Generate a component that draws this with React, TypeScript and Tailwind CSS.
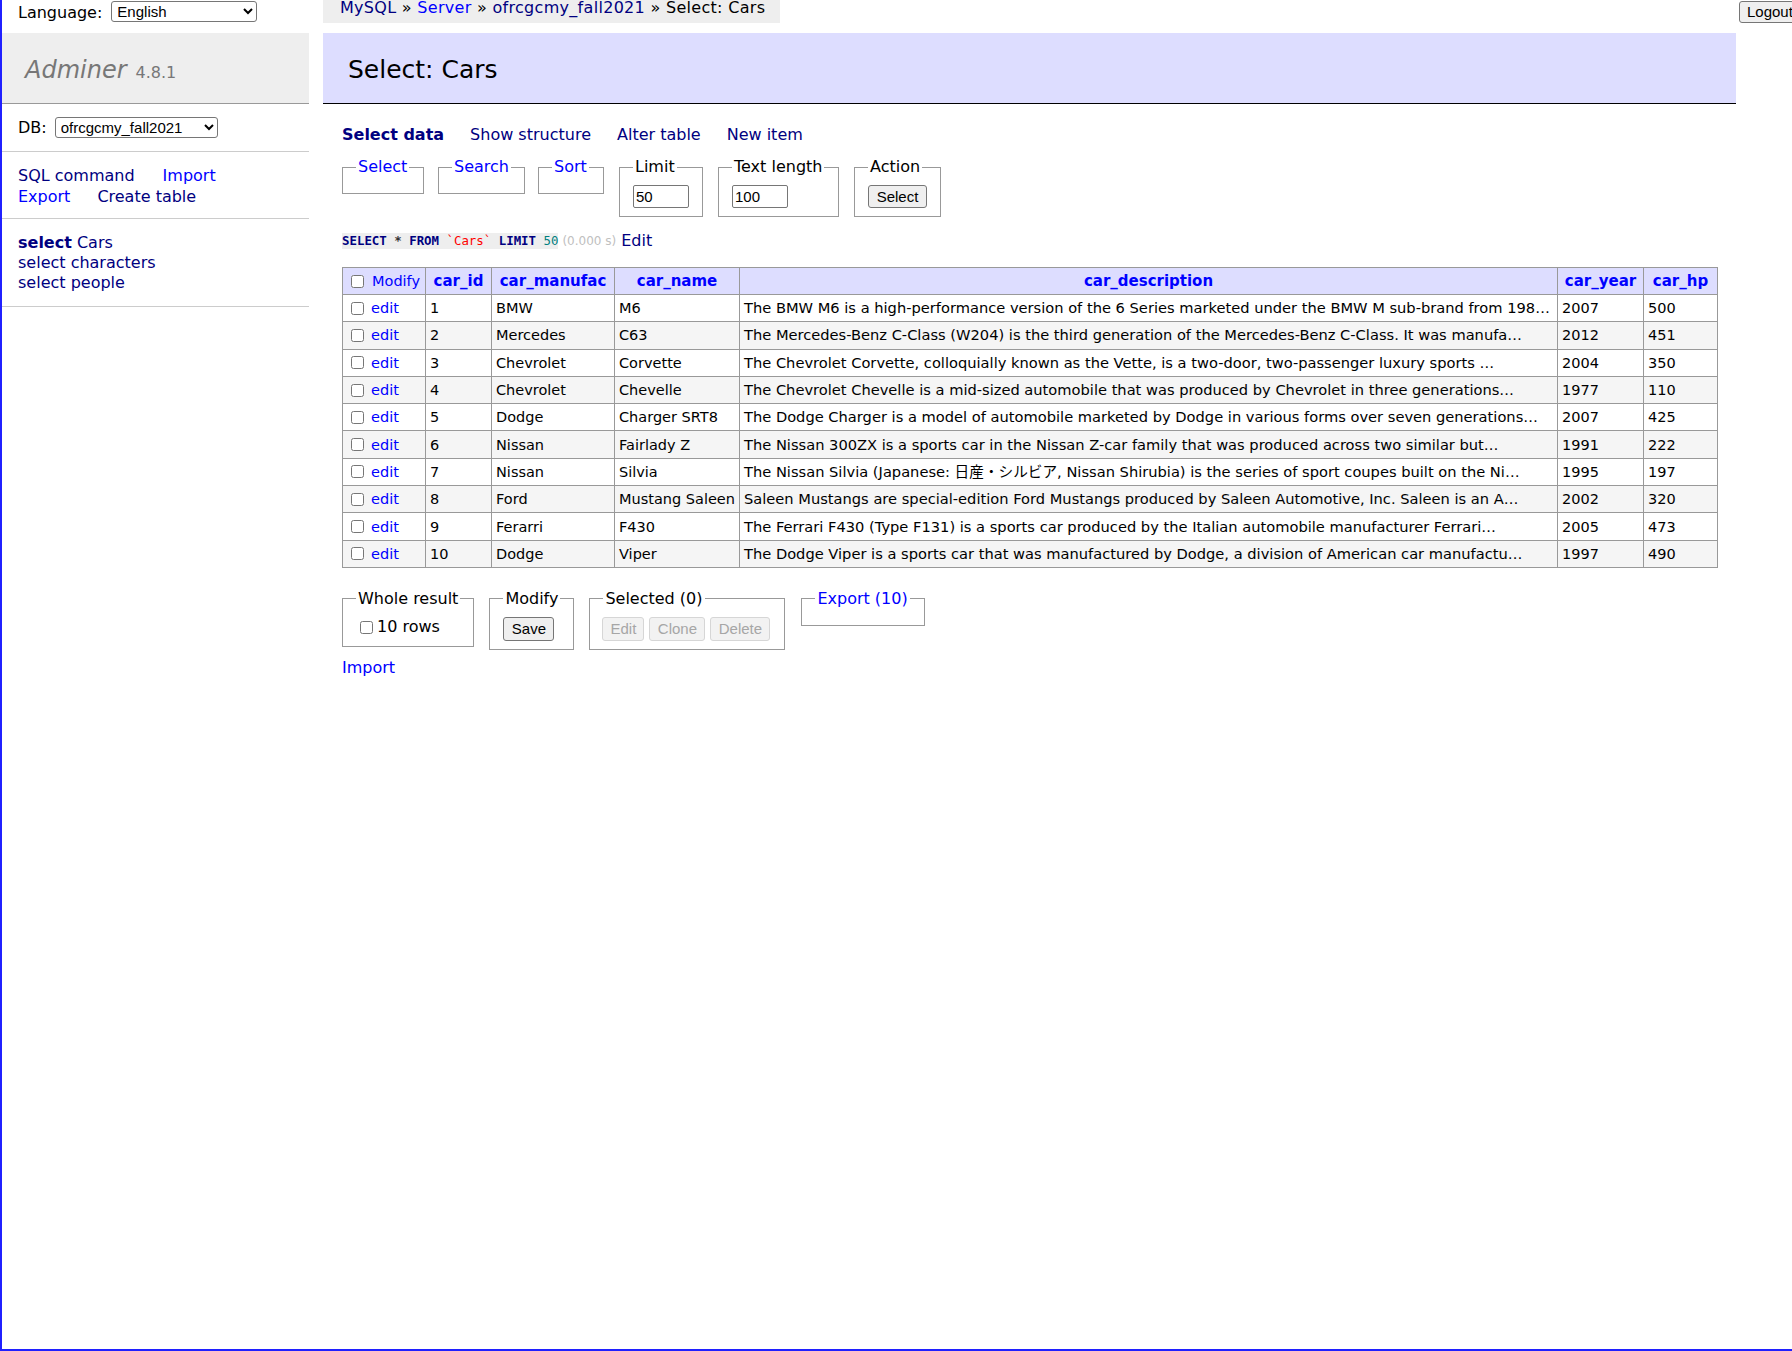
import React from "react";

// Link colours used by Adminer: unvisited blue, visited navy
const BLUE = "text-[#0000ff]";
const NAVY = "text-[#000080]";
const CONTROL = "font-['Liberation_Sans',Arial,sans-serif] text-[15px]";

type Car = {
  id: number;
  manufac: string;
  name: string;
  desc: string;
  year: number;
  hp: number;
};

const cars: Car[] = [
  { id: 1, manufac: "BMW", name: "M6", desc: "The BMW M6 is a high-performance version of the 6 Series marketed under the BMW M sub-brand from 198…", year: 2007, hp: 500 },
  { id: 2, manufac: "Mercedes", name: "C63", desc: "The Mercedes-Benz C-Class (W204) is the third generation of the Mercedes-Benz C-Class. It was manufa…", year: 2012, hp: 451 },
  { id: 3, manufac: "Chevrolet", name: "Corvette", desc: "The Chevrolet Corvette, colloquially known as the Vette, is a two-door, two-passenger luxury sports …", year: 2004, hp: 350 },
  { id: 4, manufac: "Chevrolet", name: "Chevelle", desc: "The Chevrolet Chevelle is a mid-sized automobile that was produced by Chevrolet in three generations…", year: 1977, hp: 110 },
  { id: 5, manufac: "Dodge", name: "Charger SRT8", desc: "The Dodge Charger is a model of automobile marketed by Dodge in various forms over seven generations…", year: 2007, hp: 425 },
  { id: 6, manufac: "Nissan", name: "Fairlady Z", desc: "The Nissan 300ZX is a sports car in the Nissan Z-car family that was produced across two similar but…", year: 1991, hp: 222 },
  { id: 7, manufac: "Nissan", name: "Silvia", desc: "The Nissan Silvia (Japanese: 日産・シルビア, Nissan Shirubia) is the series of sport coupes built on the Ni…", year: 1995, hp: 197 },
  { id: 8, manufac: "Ford", name: "Mustang Saleen", desc: "Saleen Mustangs are special-edition Ford Mustangs produced by Saleen Automotive, Inc. Saleen is an A…", year: 2002, hp: 320 },
  { id: 9, manufac: "Ferarri", name: "F430", desc: "The Ferrari F430 (Type F131) is a sports car produced by the Italian automobile manufacturer Ferrari…", year: 2005, hp: 473 },
  { id: 10, manufac: "Dodge", name: "Viper", desc: "The Dodge Viper is a sports car that was manufactured by Dodge, a division of American car manufactu…", year: 1997, hp: 490 },
];

const columns = ["car_id", "car_manufac", "car_name", "car_description", "car_year", "car_hp"];
const colWidths = ["w-[83px]", "w-[66px]", "w-[123px]", "w-[125px]", "w-[818px]", "w-[86px]", "w-[74px]"];

// Small native-looking checkbox
const Check = ({ className = "" }: { className?: string }) => (
  <input type="checkbox" className={`m-0 h-[13px] w-[13px] shrink-0 ${className}`} />
);

// Fieldset with a legend sitting on the top border
const Box = ({
  legend,
  className,
  children,
}: {
  legend: React.ReactNode;
  className: string;
  children?: React.ReactNode;
}) => (
  <fieldset className={`${className} shrink-0 border border-[#999] px-[13px] pt-[8px] pb-[8px]`}>
    <legend className="whitespace-nowrap px-[2px] leading-[20px]">{legend}</legend>
    {children}
  </fieldset>
);

const Sidebar = () => (
  <aside className="w-[307px] shrink-0">
    {/* Language chooser */}
    <div className="flex h-[33px] items-start pl-[16px] pt-[1px]">
      <span className="mr-[9px] mt-[2px]">Language:</span>
      <select className={`${CONTROL} h-[21px] w-[146px] rounded-[3px] border border-[#767676] bg-white pl-[1px] text-black`}>
        <option>English</option>
      </select>
    </div>

    {/* Logo */}
    <h1 className="flex h-[71px] items-center border-b border-[#999] bg-[#eee] pt-[7px] pl-[23px] text-[#777]">
      <div className="flex items-baseline">
        <span className="text-[24px] italic">Adminer</span>
        <span className="ml-[9px] text-[16px]">4.8.1</span>
      </div>
    </h1>

    {/* DB chooser */}
    <div className="flex h-[48px] items-start border-b border-[#ccc] pl-[16px] pt-[13px]">
      <span className="mr-[8px] mt-[1px]">DB:</span>
      <select className={`${CONTROL} h-[21px] w-[163px] rounded-[3px] border border-[#767676] bg-white pl-[1px] text-black`}>
        <option>ofrcgcmy_fall2021</option>
      </select>
    </div>

    {/* Links */}
    <div className="border-b border-[#ccc] pt-[13px] pb-[11px] pl-[16px] leading-[21px]">
      <div className="flex gap-[28px]">
        <a className={NAVY}>SQL command</a>
        <a className={BLUE}>Import</a>
      </div>
      <div className="flex gap-[27px]">
        <a className={BLUE}>Export</a>
        <a className={NAVY}>Create table</a>
      </div>
    </div>

    {/* Tables */}
    <div className={`border-b border-[#ccc] pt-[14px] pb-[13px] pl-[16px] ${NAVY}`}>
      <div>
        <span className="font-bold">select</span> Cars
      </div>
      <div>select characters</div>
      <div>select people</div>
    </div>
  </aside>
);

const Main = () => (
  <main className="ml-[14px] w-[1413px] shrink-0">
    {/* Breadcrumb */}
    <div className="h-[23px] w-[457px] whitespace-nowrap bg-[#eee] pl-[17px] leading-[15px] tracking-[0.3px]">
      <a className={NAVY}>MySQL</a> » <a className={BLUE}>Server</a> »{" "}
      <a className={NAVY}>ofrcgcmy_fall2021</a> » Select: Cars
    </div>

    <h2 className="mt-[10px] flex h-[71px] items-center border-b border-black bg-[#ddf] pt-[4px] pl-[25px] text-[25px]">
      Select: Cars
    </h2>

    <div className="pl-[19px]">
      {/* Tabs */}
      <div className={`mt-[21px] flex gap-[26px] ${NAVY}`}>
        <span className="font-bold">Select data</span>
        <a>Show structure</a>
        <a>Alter table</a>
        <a>New item</a>
      </div>

      {/* Search form */}
      <div className="mt-[12px] flex items-start">
        <Box className="w-[82px]" legend={<a className={BLUE}>Select</a>} />
        <Box className="ml-[14px] w-[87px]" legend={<a className={BLUE}>Search</a>} />
        <Box className="ml-[13px] w-[66px]" legend={<a className={BLUE}>Sort</a>} />
        <Box className="ml-[15px] w-[82px]" legend="Limit">
          <input
            defaultValue="50"
            className={`${CONTROL} block h-[23px] w-[56px] rounded-[2px] border border-[#767676] px-[2px]`}
          />
        </Box>
        <Box className="ml-[15px] w-[121px]" legend="Text length">
          <input
            defaultValue="100"
            className={`${CONTROL} block h-[23px] w-[56px] rounded-[2px] border border-[#767676] px-[2px]`}
          />
        </Box>
        <Box className="ml-[15px] w-[84px]" legend="Action">
          <button className={`${CONTROL} block h-[23px] w-[59px] rounded-[3px] border border-[#767676] bg-[#efefef]`}>
            Select
          </button>
        </Box>
      </div>

      {/* Query line */}
      <div className="mt-[14px] flex items-center">
        <code className="bg-[#eee] font-['DejaVu_Sans_Mono',monospace] text-[12.4px] leading-[16px] font-bold">
          <span className={NAVY}>SELECT</span> <span className="text-[#333]">*</span>{" "}
          <span className={NAVY}>FROM</span> <span className="font-normal text-[#ff0000]">`Cars`</span>{" "}
          <span className={NAVY}>LIMIT</span> <span className="font-normal text-[#007f7f]">50</span>
        </code>
        <span className="ml-[4px] text-[12px] text-[#c0c0c0]">(0.000 s)</span>
        <a className={`ml-[5px] ${NAVY}`}>Edit</a>
      </div>

      {/* Result table */}
      <table className="mt-[16px] table-fixed border-collapse border-t border-l border-[#999] text-[14.5px] leading-[18px]">
        <colgroup>
          {colWidths.map((w, i) => (
            <col key={i} className={w} />
          ))}
        </colgroup>
        <thead>
          <tr className="h-[27px] bg-[#ddf]">
            <td className="border-r border-b border-[#999] px-[4px]">
              <div className="flex items-center">
                <Check className="ml-[4px] mr-[8px]" />
                <a className={BLUE}>Modify</a>
              </div>
            </td>
            {columns.map((c) => (
              <th key={c} className={`border-r border-b border-[#999] px-[6px] text-center text-[15px] font-bold ${BLUE}`}>
                {c}
              </th>
            ))}
          </tr>
        </thead>
        <tbody>
          {cars.map((car, i) => (
            <tr key={car.id} className={`h-[27.3px] ${i % 2 === 1 ? "bg-[#f5f5f5]" : "bg-white"}`}>
              <td className="border-r border-b border-[#999] px-[4px]">
                <div className="flex items-center">
                  <Check className="ml-[4px] mr-[7px]" />
                  <a className={BLUE}>edit</a>
                </div>
              </td>
              <td className="border-r border-b border-[#999] px-[4px]">{car.id}</td>
              <td className="border-r border-b border-[#999] px-[4px]">{car.manufac}</td>
              <td className="overflow-hidden whitespace-nowrap border-r border-b border-[#999] px-[4px]">{car.name}</td>
              <td className="overflow-hidden whitespace-nowrap border-r border-b border-[#999] px-[4px] text-[14.65px]">
                {car.desc}
              </td>
              <td className="border-r border-b border-[#999] px-[4px]">{car.year}</td>
              <td className="border-r border-b border-[#999] px-[4px]">{car.hp}</td>
            </tr>
          ))}
        </tbody>
      </table>

      {/* Result actions */}
      <div className="mt-[21px] flex items-start">
        <Box className="w-[132px]" legend="Whole result">
          <label className="flex h-[21px] items-center">
            <Check className="ml-[4px] mr-[4px]" />
            10 rows
          </label>
        </Box>
        <Box className="ml-[15px] w-[85px]" legend="Modify">
          <button className={`${CONTROL} block h-[24px] w-[51px] rounded-[3px] border border-[#767676] bg-[#efefef]`}>
            Save
          </button>
        </Box>
        <Box className="ml-[15px] w-[196px]" legend="Selected (0)">
          <div className="-ml-[1px] flex gap-[5px]">
            {[
              ["Edit", "w-[42px]"],
              ["Clone", "w-[56px]"],
              ["Delete", "w-[60px]"],
            ].map(([label, w]) => (
              <button
                key={label}
                disabled
                className={`${CONTROL} h-[24px] ${w} rounded-[3px] border border-[#d6d6d6] bg-[#f2f2f2] text-[#a6a6a6]`}
              >
                {label}
              </button>
            ))}
          </div>
        </Box>
        <Box className="ml-[16px] w-[124px]" legend={<a className={BLUE}>Export (10)</a>} />
      </div>

      <div className="mt-[8px]">
        <a className={BLUE}>Import</a>
      </div>
    </div>
  </main>
);

export default function App() {
  return (
    <div className="relative h-[1351px] w-full overflow-hidden border-b-2 border-l-2 border-[#2020ff] bg-white font-['DejaVu_Sans','Noto_Sans_CJK_JP',sans-serif] text-[16px] leading-[20px] text-black">
      <div className="flex">
        <Sidebar />
        <Main />
      </div>
      <button
        className={`${CONTROL} absolute left-[1737px] top-[1px] h-[22px] rounded-[3px] border border-[#767676] bg-[#efefef] px-[7px] leading-[20px]`}
      >
        Logout
      </button>
    </div>
  );
}
